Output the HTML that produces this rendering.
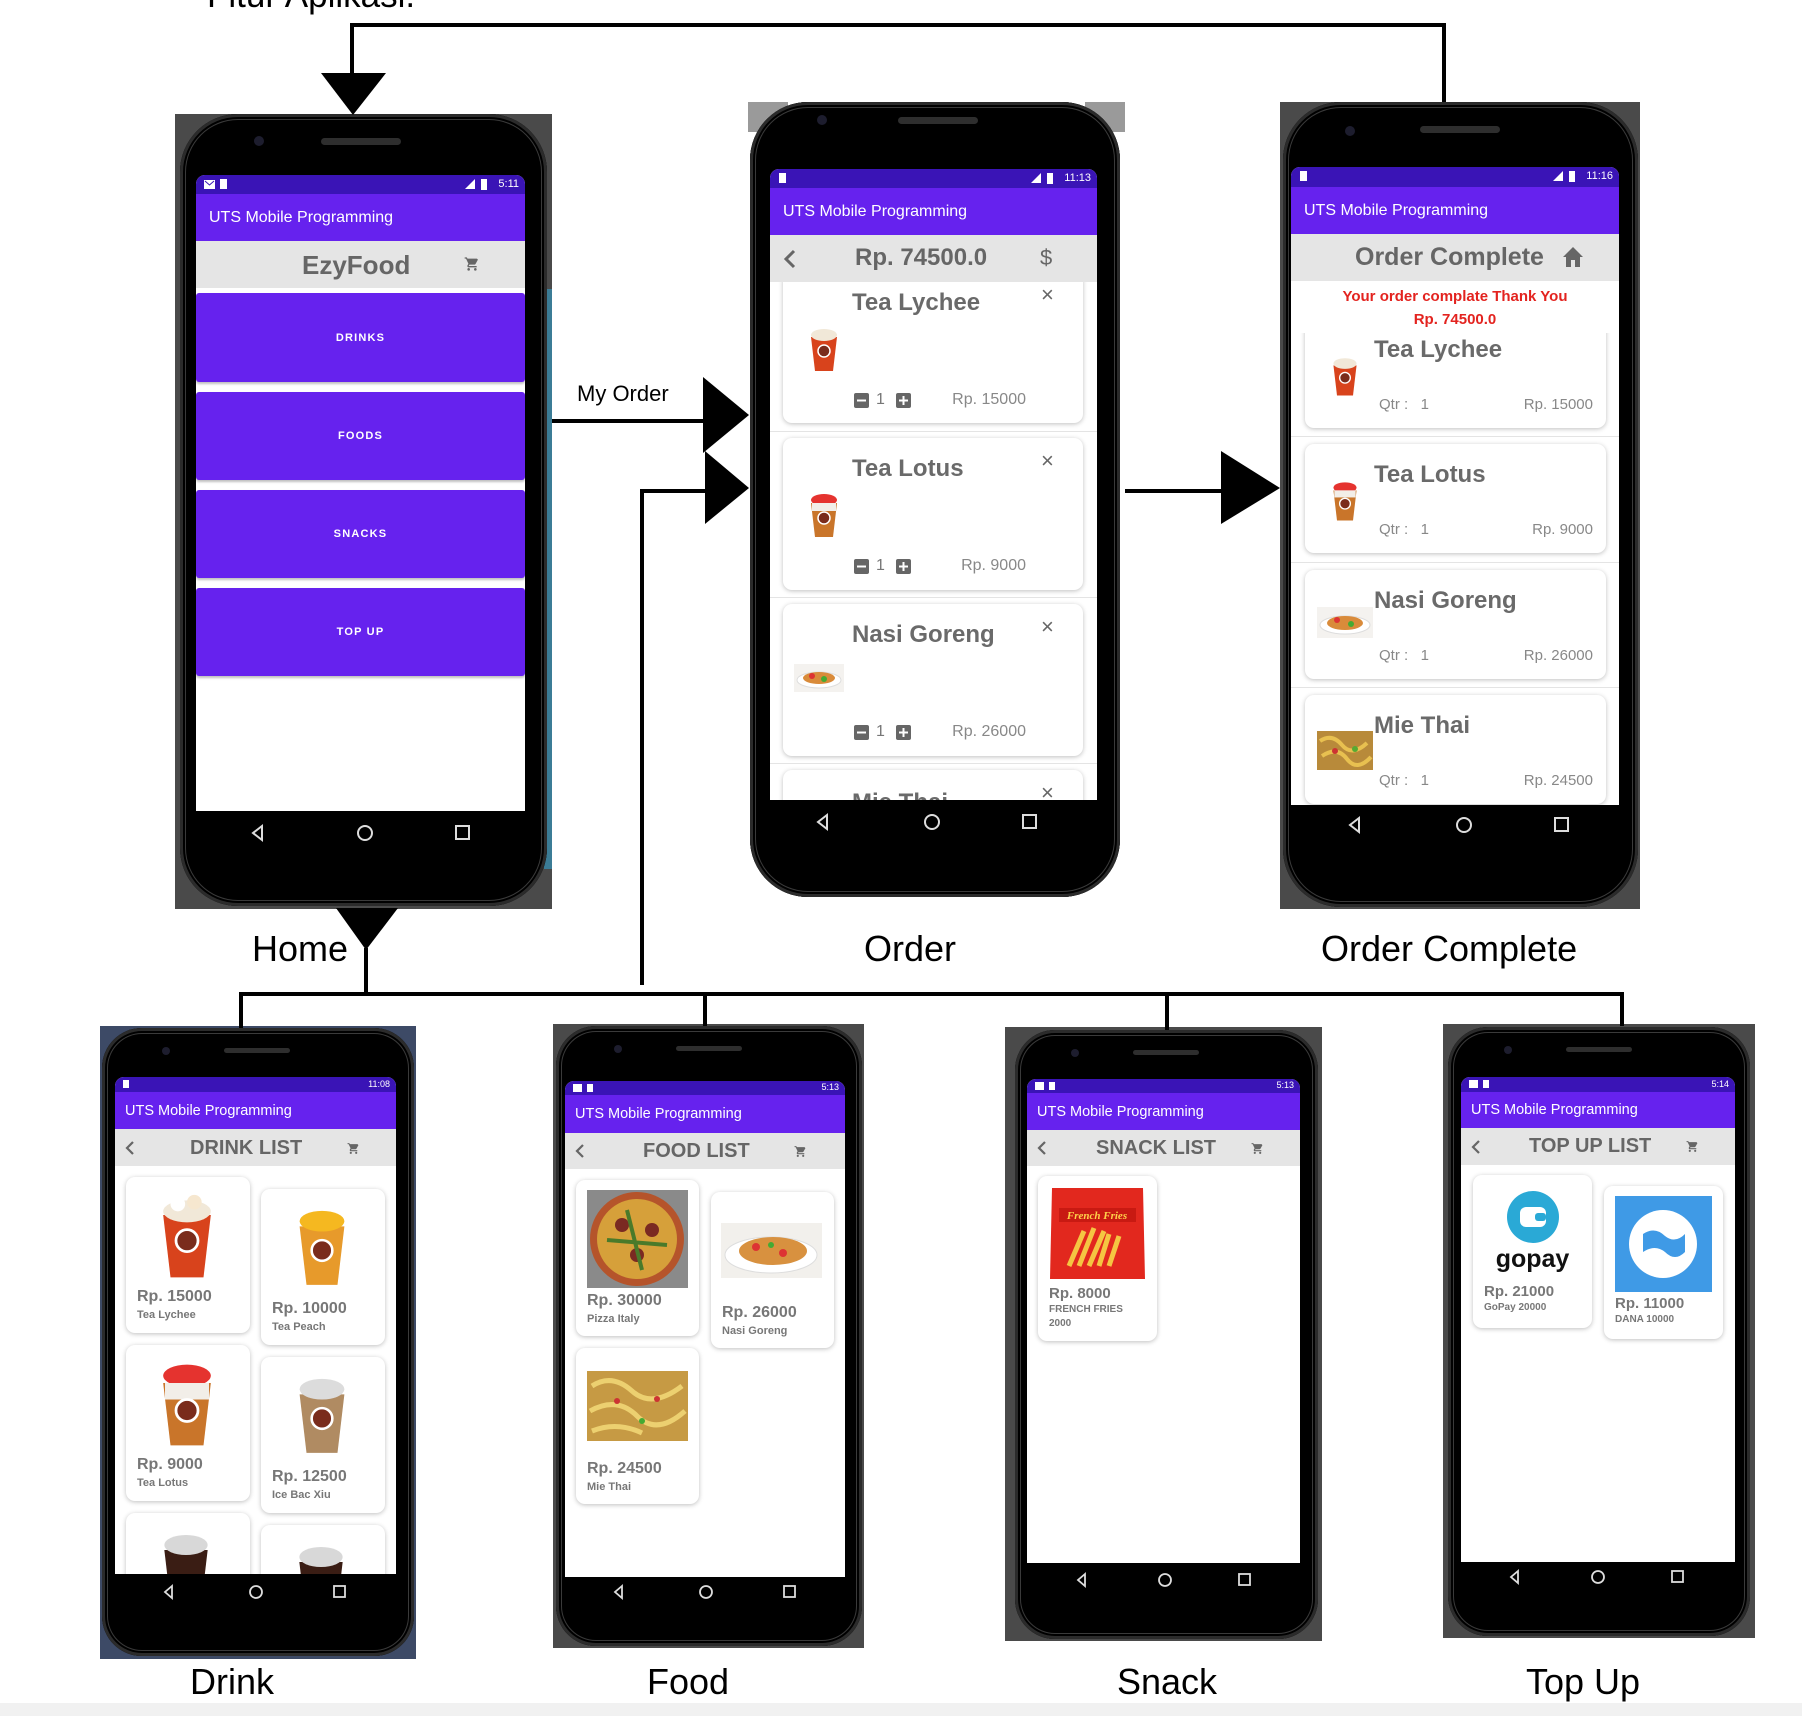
<!DOCTYPE html>
<html><head><meta charset="utf-8">
<style>
*{margin:0;padding:0;box-sizing:border-box}
body{width:1802px;height:1716px;position:relative;background:#fff;overflow:hidden;font-family:"Liberation Sans",Arial,sans-serif}
.a{position:absolute}
.box{position:absolute;background:#4a4a4a}
.bd{position:absolute;background:#000;box-shadow:inset 0 0 0 3px #2b2b2b,inset 0 0 0 5px #000,inset 0 0 0 6px #3a3a3a}
.scr{position:absolute;background:#fff;overflow:hidden;border-radius:9px 9px 0 0}
.sb{position:absolute;left:0;right:0;top:0;background:#3a14b6;color:#fff}
.ab{position:absolute;left:0;right:0;background:#6622ee;color:#fff;display:flex;align-items:center}
.hd{position:absolute;left:0;right:0;background:#e5e5e5;color:#666;font-weight:bold}
.lbl{position:absolute;font-size:36px;color:#000;white-space:nowrap}
.btn{position:absolute;left:0;right:0;background:#6622ee;color:#fff;font-size:11px;font-weight:bold;letter-spacing:1.2px;display:flex;align-items:center;justify-content:center;border-radius:3px;box-shadow:0 2px 2px rgba(0,0,0,.25)}
.card{position:absolute;background:#fff;border-radius:9px;box-shadow:0 1px 5px rgba(0,0,0,.25)}
.gt{color:#777;font-weight:bold;position:absolute;white-space:nowrap}
.spk{position:absolute;background:#2e2e2e;border-radius:4px}
.cam{position:absolute;background:#1d1d2e;border-radius:50%}
.time{position:absolute;right:6px;font-size:11px}
.bab{font-size:14.5px}
.bt{font-size:20px}
</style></head><body>

<div class="lbl" style="left:207px;top:-24px;font-size:35px">Fitur Aplikasi.</div>

<!-- ============ HOME ============ -->
<div class="box" style="left:175px;top:114px;width:377px;height:795px">
 <div class="a" style="right:0;top:175px;width:8px;height:580px;background:#3b7c96"></div>
 <div class="bd" style="left:5px;top:0;width:367px;height:792px;border-radius:58px">
  <div class="spk" style="left:141px;top:24px;width:80px;height:7px"></div>
  <div class="cam" style="left:74px;top:22px;width:10px;height:10px"></div>
  <div class="scr" style="left:16px;top:61px;width:329px;height:636px">
   <div class="sb" style="height:19px">
    <svg class="a" style="left:8px;top:4px" width="30" height="11"><rect x="0" y="1" width="11" height="9" fill="#fff"/><path d="M1 2 L5.5 6 L10 2" stroke="#3a14b6" fill="none"/><rect x="16" y="0" width="7" height="10" fill="#fff"/></svg>
    <svg class="a" style="right:34px;top:4px" width="26" height="11"><path d="M0 10 L10 0 L10 10Z" fill="#fff"/><rect x="16" y="0" width="6" height="11" fill="#fff"/></svg>
    <div class="time" style="top:3px">5:11</div>
   </div>
   <div class="ab" style="top:19px;height:47px;padding-left:13px;font-size:16px">UTS Mobile Programming</div>
   <div class="hd" style="top:66px;height:47px">
    <div class="a" style="left:106px;top:9px;font-size:26px">EzyFood</div>
    <svg class="a" style="left:268px;top:15px" width="16" height="16" viewBox="0 0 24 24"><path fill="#666" d="M7 18c-1.1 0-2 .9-2 2s.9 2 2 2 2-.9 2-2-.9-2-2-2zM1 2v2h2l3.6 7.6-1.4 2.4c-.1.3-.2.6-.2 1 0 1.1.9 2 2 2h12v-2H7.4c-.1 0-.2-.1-.2-.2v-.1l.9-1.7h7.5c.7 0 1.4-.4 1.700-1l3.6-6.5L19.4 4H5.2l-.9-2H1zm16 16c-1.1 0-2 .9-2 2s.9 2 2 2 2-.9 2-2-.9-2-2-2z"/></svg>
   </div>
   <div class="btn" style="top:118px;height:89px">DRINKS</div>
   <div class="btn" style="top:217px;height:88px">FOODS</div>
   <div class="btn" style="top:315px;height:88px">SNACKS</div>
   <div class="btn" style="top:413px;height:88px">TOP UP</div>
  </div>
  <svg class="a" style="left:70px;top:707px" width="230" height="24"><path d="M12 5 L3 12 L12 19Z" stroke="#ddd" stroke-width="2" fill="none"/><circle cx="115" cy="12" r="7" stroke="#ddd" stroke-width="2" fill="none"/><rect x="206" y="5" width="13" height="13" stroke="#ddd" stroke-width="2" fill="none"/></svg>
 </div>
</div>

<!-- ============ ORDER ============ -->
<div class="box" style="left:748px;top:102px;width:40px;height:30px;background:#9a9a9a"></div>
<div class="box" style="left:1085px;top:102px;width:40px;height:30px;background:#9a9a9a"></div>
<div class="bd" style="left:750px;top:102px;width:370px;height:795px;border-radius:58px">
 <div class="spk" style="left:148px;top:15px;width:80px;height:7px"></div>
 <div class="cam" style="left:67px;top:13px;width:10px;height:10px"></div>
 <div class="scr" style="left:20px;top:67px;width:327px;height:631px">
  <div class="card" style="left:13px;top:103px;width:300px;height:151px">
   <div class="gt" style="left:69px;top:17px;font-size:24px;color:#6a6a6a">Tea Lychee</div>
   <div class="a" style="left:258px;top:10px;font-size:22px;color:#666">×</div>
   <svg class="a" style="left:23px;top:53px" width="36" height="48" viewBox="0 0 36 48"><path d="M5 12 L31 12 L27 46 L9 46Z" fill="#d8431c"/><ellipse cx="18" cy="10" rx="13" ry="6" fill="#f1e8d8"/><circle cx="18" cy="26" r="6" fill="#7a2c1c" stroke="#fff" stroke-width="1.5"/></svg>
   <svg class="a" style="left:71px;top:121px" width="58" height="15"><rect x="0" y="0" width="15" height="15" rx="2" fill="#666"/><rect x="3" y="6.5" width="9" height="2" fill="#fff"/><rect x="42" y="0" width="15" height="15" rx="2" fill="#666"/><rect x="45" y="6.5" width="9" height="2" fill="#fff"/><rect x="48.5" y="3" width="2" height="9" fill="#fff"/></svg>
   <div class="a" style="left:93px;top:119px;font-size:16px;color:#777">1</div>
   <div class="a" style="right:57px;top:119px;font-size:16px;color:#888">Rp. 15000</div>
  </div>
  <div class="a" style="left:0;right:0;top:262px;height:1px;background:#e4e4e4"></div>
  <div class="card" style="left:13px;top:269px;width:300px;height:152px">
   <div class="gt" style="left:69px;top:17px;font-size:24px;color:#6a6a6a">Tea Lotus</div>
   <div class="a" style="left:258px;top:10px;font-size:22px;color:#666">×</div>
   <svg class="a" style="left:23px;top:53px" width="36" height="48" viewBox="0 0 36 48"><path d="M5 12 L31 12 L27 46 L9 46Z" fill="#c9752a"/><ellipse cx="18" cy="9" rx="13" ry="6" fill="#e5332f"/><rect x="6" y="12" width="24" height="8" fill="#f2eee8"/><circle cx="18" cy="27" r="6" fill="#7a2c1c" stroke="#fff" stroke-width="1.5"/></svg>
   <svg class="a" style="left:71px;top:121px" width="58" height="15"><rect x="0" y="0" width="15" height="15" rx="2" fill="#666"/><rect x="3" y="6.5" width="9" height="2" fill="#fff"/><rect x="42" y="0" width="15" height="15" rx="2" fill="#666"/><rect x="45" y="6.5" width="9" height="2" fill="#fff"/><rect x="48.5" y="3" width="2" height="9" fill="#fff"/></svg>
   <div class="a" style="left:93px;top:119px;font-size:16px;color:#777">1</div>
   <div class="a" style="right:57px;top:119px;font-size:16px;color:#888">Rp. 9000</div>
  </div>
  <div class="a" style="left:0;right:0;top:428px;height:1px;background:#e4e4e4"></div>
  <div class="card" style="left:13px;top:435px;width:300px;height:152px">
   <div class="gt" style="left:69px;top:17px;font-size:24px;color:#6a6a6a">Nasi Goreng</div>
   <div class="a" style="left:258px;top:10px;font-size:22px;color:#666">×</div>
   <svg class="a" style="left:11px;top:60px" width="50" height="28"><rect width="50" height="28" fill="#f4f2ef"/><ellipse cx="25" cy="16" rx="22" ry="8" fill="#fff" stroke="#ddd"/><ellipse cx="25" cy="14" rx="16" ry="6" fill="#d98b3a"/><circle cx="18" cy="12" r="3" fill="#d33"/><circle cx="30" cy="15" r="3" fill="#4a3"/></svg>
   <svg class="a" style="left:71px;top:121px" width="58" height="15"><rect x="0" y="0" width="15" height="15" rx="2" fill="#666"/><rect x="3" y="6.5" width="9" height="2" fill="#fff"/><rect x="42" y="0" width="15" height="15" rx="2" fill="#666"/><rect x="45" y="6.5" width="9" height="2" fill="#fff"/><rect x="48.5" y="3" width="2" height="9" fill="#fff"/></svg>
   <div class="a" style="left:93px;top:119px;font-size:16px;color:#777">1</div>
   <div class="a" style="right:57px;top:119px;font-size:16px;color:#888">Rp. 26000</div>
  </div>
  <div class="a" style="left:0;right:0;top:594px;height:1px;background:#e4e4e4"></div>
  <div class="card" style="left:13px;top:601px;width:300px;height:152px">
   <div class="gt" style="left:69px;top:19px;font-size:24px;color:#6a6a6a">Mie Thai</div>
   <div class="a" style="left:258px;top:10px;font-size:22px;color:#666">×</div>
  </div>
  <div class="sb" style="height:19px">
   <svg class="a" style="left:8px;top:4px" width="10" height="11"><rect x="1" y="0" width="7" height="10" fill="#fff"/></svg>
   <svg class="a" style="right:40px;top:4px" width="26" height="11"><path d="M0 10 L10 0 L10 10Z" fill="#fff"/><rect x="16" y="0" width="6" height="11" fill="#fff"/></svg>
   <div class="time" style="top:3px">11:13</div>
  </div>
  <div class="ab" style="top:19px;height:47px;padding-left:13px;font-size:16px">UTS Mobile Programming</div>
  <div class="hd" style="top:66px;height:47px">
   <svg class="a" style="left:13px;top:14px" width="14" height="20"><path d="M11 2 L3 10 L11 18" stroke="#666" stroke-width="3" fill="none"/></svg>
   <div class="a" style="left:85px;top:9px;font-size:24px">Rp. 74500.0</div>
   <div class="a" style="left:270px;top:10px;font-size:22px;font-weight:normal">$</div>
  </div>
 </div>
 <svg class="a" style="left:65px;top:708px" width="230" height="24"><path d="M12 5 L3 12 L12 19Z" stroke="#ddd" stroke-width="2" fill="none"/><circle cx="117" cy="12" r="7" stroke="#ddd" stroke-width="2" fill="none"/><rect x="208" y="5" width="13" height="13" stroke="#ddd" stroke-width="2" fill="none"/></svg>
</div>

<!-- ============ ORDER COMPLETE ============ -->
<div class="box" style="left:1280px;top:102px;width:360px;height:807px">
 <div class="bd" style="left:3px;top:0;width:355px;height:805px;border-radius:58px">
  <div class="spk" style="left:137px;top:24px;width:80px;height:7px"></div>
  <div class="cam" style="left:62px;top:24px;width:10px;height:10px"></div>
  <div class="scr" style="left:8px;top:65px;width:328px;height:638px">
   <div class="sb" style="height:20px">
    <svg class="a" style="left:8px;top:4px" width="10" height="11"><rect x="1" y="0" width="7" height="10" fill="#fff"/></svg>
    <svg class="a" style="right:40px;top:4px" width="26" height="11"><path d="M0 10 L10 0 L10 10Z" fill="#fff"/><rect x="16" y="0" width="6" height="11" fill="#fff"/></svg>
    <div class="time" style="top:3px">11:16</div>
   </div>
   <div class="ab" style="top:20px;height:47px;padding-left:13px;font-size:16px">UTS Mobile Programming</div>
   <div class="hd" style="top:67px;height:47px">
    <div class="a" style="left:64px;top:9px;font-size:25px">Order Complete</div>
    <svg class="a" style="left:270px;top:12px" width="24" height="22" viewBox="0 0 24 22"><path d="M10 21v-7h4v7h5V11h3L12 1 2 11h3v10z" fill="#666"/></svg>
   </div>
   <div class="a" style="left:0;width:328px;top:118px;text-align:center;color:#e3231f;font-weight:bold;font-size:15px;line-height:23px">Your order complate Thank You<br>Rp. 74500.0</div>
   <div class="a" style="left:0;top:166px;width:328px;height:472px;overflow:hidden">
    <div class="card" style="left:14px;top:-14px;width:301px;height:109px">
     <div class="gt" style="left:69px;top:17px;font-size:24px;color:#6a6a6a">Tea Lychee</div>
     <svg class="a" style="left:24px;top:35px" width="32" height="44" viewBox="0 0 36 48"><path d="M5 12 L31 12 L27 46 L9 46Z" fill="#d8431c"/><ellipse cx="18" cy="10" rx="13" ry="6" fill="#f1e8d8"/><circle cx="18" cy="26" r="6" fill="#7a2c1c" stroke="#fff" stroke-width="1.5"/></svg>
     <div class="a" style="left:74px;top:77px;font-size:15px;color:#888">Qtr :&nbsp;&nbsp;&nbsp;1</div>
     <div class="a" style="right:13px;top:77px;font-size:15px;color:#888">Rp. 15000</div>
    </div>
    <div class="a" style="left:0;right:0;top:103px;height:1px;background:#e4e4e4"></div>
    <div class="card" style="left:14px;top:111px;width:301px;height:109px">
     <div class="gt" style="left:69px;top:17px;font-size:24px;color:#6a6a6a">Tea Lotus</div>
     <svg class="a" style="left:24px;top:35px" width="32" height="44" viewBox="0 0 36 48"><path d="M5 12 L31 12 L27 46 L9 46Z" fill="#c9752a"/><ellipse cx="18" cy="9" rx="13" ry="6" fill="#e5332f"/><rect x="6" y="12" width="24" height="8" fill="#f2eee8"/><circle cx="18" cy="27" r="6" fill="#7a2c1c" stroke="#fff" stroke-width="1.5"/></svg>
     <div class="a" style="left:74px;top:77px;font-size:15px;color:#888">Qtr :&nbsp;&nbsp;&nbsp;1</div>
     <div class="a" style="right:13px;top:77px;font-size:15px;color:#888">Rp. 9000</div>
    </div>
    <div class="a" style="left:0;right:0;top:229px;height:1px;background:#e4e4e4"></div>
    <div class="card" style="left:14px;top:237px;width:301px;height:109px">
     <div class="gt" style="left:69px;top:17px;font-size:24px;color:#6a6a6a">Nasi Goreng</div>
     <svg class="a" style="left:12px;top:37px" width="56" height="31"><rect width="56" height="31" fill="#f4f2ef"/><ellipse cx="28" cy="18" rx="25" ry="9" fill="#fff" stroke="#ddd"/><ellipse cx="28" cy="16" rx="18" ry="7" fill="#d98b3a"/><circle cx="20" cy="13" r="3" fill="#d33"/><circle cx="34" cy="17" r="3" fill="#4a3"/></svg>
     <div class="a" style="left:74px;top:77px;font-size:15px;color:#888">Qtr :&nbsp;&nbsp;&nbsp;1</div>
     <div class="a" style="right:13px;top:77px;font-size:15px;color:#888">Rp. 26000</div>
    </div>
    <div class="a" style="left:0;right:0;top:354px;height:1px;background:#e4e4e4"></div>
    <div class="card" style="left:14px;top:362px;width:301px;height:109px">
     <div class="gt" style="left:69px;top:17px;font-size:24px;color:#6a6a6a">Mie Thai</div>
     <svg class="a" style="left:12px;top:36px" width="56" height="39"><rect width="56" height="39" fill="#b88a3a"/><path d="M3 10 Q15 2 25 14 T50 12 M5 25 Q20 15 30 28 T54 26" stroke="#e8c050" stroke-width="4" fill="none"/><circle cx="18" cy="20" r="3" fill="#c33"/><circle cx="38" cy="18" r="3" fill="#5a3"/></svg>
     <div class="a" style="left:74px;top:77px;font-size:15px;color:#888">Qtr :&nbsp;&nbsp;&nbsp;1</div>
     <div class="a" style="right:13px;top:77px;font-size:15px;color:#888">Rp. 24500</div>
    </div>
   </div>
  </div>
  <svg class="a" style="left:64px;top:711px" width="230" height="24"><path d="M12 5 L3 12 L12 19Z" stroke="#ddd" stroke-width="2" fill="none"/><circle cx="117" cy="12" r="7" stroke="#ddd" stroke-width="2" fill="none"/><rect x="208" y="5" width="13" height="13" stroke="#ddd" stroke-width="2" fill="none"/></svg>
 </div>
</div>

<!-- labels -->
<div class="lbl" style="left:252px;top:928px">Home</div>
<div class="lbl" style="left:864px;top:928px">Order</div>
<div class="lbl" style="left:1321px;top:928px">Order Complete</div>
<div class="lbl" style="left:190px;top:1661px">Drink</div>
<div class="lbl" style="left:647px;top:1661px">Food</div>
<div class="lbl" style="left:1117px;top:1661px">Snack</div>
<div class="lbl" style="left:1526px;top:1661px">Top Up</div>

<!-- ============ DRINK ============ -->
<div class="box" style="left:100px;top:1026px;width:316px;height:633px;background:#3d4a66">
 <div class="bd" style="left:2px;top:2px;width:312px;height:628px;border-radius:40px">
  <div class="spk" style="left:122px;top:20px;width:66px;height:5px"></div>
  <div class="cam" style="left:60px;top:19px;width:8px;height:8px"></div>
  <div class="scr" style="left:13px;top:49px;width:281px;height:497px">
   <div class="card" style="left:11px;top:100px;width:124px;height:156px">
    <svg class="a" style="left:28px;top:15px" width="66" height="90" viewBox="0 0 36 48"><path d="M5 12 L31 12 L27 46 L9 46Z" fill="#d8431c"/><ellipse cx="18" cy="10" rx="13" ry="6" fill="#f1e8d8"/><circle cx="13" cy="6" r="4" fill="#fff"/><circle cx="22" cy="5" r="4" fill="#f6e7cf"/><circle cx="18" cy="26" r="6" fill="#7a2c1c" stroke="#fff" stroke-width="1.5"/></svg>
    <div class="gt" style="left:11px;top:111px;font-size:16px">Rp. 15000</div>
    <div class="gt" style="left:11px;top:132px;font-size:11px">Tea Lychee</div>
   </div>
   <div class="card" style="left:146px;top:112px;width:124px;height:156px">
    <svg class="a" style="left:30px;top:15px" width="62" height="86" viewBox="0 0 36 48"><path d="M5 12 L31 12 L27 46 L9 46Z" fill="#e79a2b"/><ellipse cx="18" cy="9" rx="13" ry="6" fill="#f5b820"/><circle cx="18" cy="26" r="6" fill="#7a2c1c" stroke="#fff" stroke-width="1.5"/></svg>
    <div class="gt" style="left:11px;top:111px;font-size:16px">Rp. 10000</div>
    <div class="gt" style="left:11px;top:132px;font-size:11px">Tea Peach</div>
   </div>
   <div class="card" style="left:11px;top:268px;width:124px;height:156px">
    <svg class="a" style="left:28px;top:15px" width="66" height="90" viewBox="0 0 36 48"><path d="M5 12 L31 12 L27 46 L9 46Z" fill="#c9752a"/><ellipse cx="18" cy="8" rx="13" ry="6" fill="#e5332f"/><rect x="6" y="12" width="24" height="9" fill="#f2eee8"/><circle cx="18" cy="27" r="6" fill="#7a2c1c" stroke="#fff" stroke-width="1.5"/></svg>
    <div class="gt" style="left:11px;top:111px;font-size:16px">Rp. 9000</div>
    <div class="gt" style="left:11px;top:132px;font-size:11px">Tea Lotus</div>
   </div>
   <div class="card" style="left:146px;top:280px;width:124px;height:156px">
    <svg class="a" style="left:30px;top:15px" width="62" height="86" viewBox="0 0 36 48"><path d="M5 12 L31 12 L27 46 L9 46Z" fill="#b08b62"/><ellipse cx="18" cy="9" rx="13" ry="6" fill="#dcdcdc"/><circle cx="18" cy="26" r="6" fill="#7a2c1c" stroke="#fff" stroke-width="1.5"/></svg>
    <div class="gt" style="left:11px;top:111px;font-size:16px">Rp. 12500</div>
    <div class="gt" style="left:11px;top:132px;font-size:11px">Ice Bac Xiu</div>
   </div>
   <div class="card" style="left:11px;top:436px;width:124px;height:156px">
    <svg class="a" style="left:30px;top:15px" width="60" height="84" viewBox="0 0 36 48"><path d="M5 12 L31 12 L27 46 L9 46Z" fill="#3a1d14"/><ellipse cx="18" cy="9" rx="13" ry="6" fill="#d8d8d8"/></svg>
   </div>
   <div class="card" style="left:146px;top:448px;width:124px;height:156px">
    <svg class="a" style="left:30px;top:15px" width="60" height="84" viewBox="0 0 36 48"><path d="M5 12 L31 12 L27 46 L9 46Z" fill="#3a1d14"/><ellipse cx="18" cy="9" rx="13" ry="6" fill="#d8d8d8"/></svg>
   </div>
   <div class="sb" style="height:15px"><svg class="a" style="left:8px;top:3px" width="8" height="9"><rect x="0" y="0" width="6" height="8" fill="#fff"/></svg><div class="time" style="top:2px;font-size:9px">11:08</div></div>
   <div class="ab bab" style="top:15px;height:37px;padding-left:10px">UTS Mobile Programming</div>
   <div class="hd" style="top:52px;height:37px">
    <svg class="a" style="left:10px;top:12px" width="10" height="14"><path d="M8 1 L2 7 L8 13" stroke="#666" stroke-width="2.2" fill="none"/></svg>
    <div class="a bt" style="left:75px;top:8px">DRINK LIST</div>
    <svg class="a" style="left:232px;top:13px" width="13" height="13" viewBox="0 0 24 24"><path fill="#666" d="M7 18c-1.1 0-2 .9-2 2s.9 2 2 2 2-.9 2-2-.9-2-2-2zM1 2v2h2l3.6 7.6-1.4 2.4c-.1.3-.2.6-.2 1 0 1.1.9 2 2 2h12v-2H7.4l.9-1.7h7.5c.7 0 1.4-.4 1.7-1l3.6-6.5L19.4 4H5.2l-.9-2H1zm16 16c-1.1 0-2 .9-2 2s.9 2 2 2 2-.9 2-2-.9-2-2-2z"/></svg>
   </div>
  </div>
  <svg class="a" style="left:60px;top:554px" width="190" height="20"><path d="M10 4 L3 10 L10 16Z" stroke="#ddd" stroke-width="1.8" fill="none"/><circle cx="94" cy="10" r="6" stroke="#ddd" stroke-width="1.8" fill="none"/><rect x="172" y="4" width="11" height="11" stroke="#ddd" stroke-width="1.8" fill="none"/></svg>
 </div>
</div>

<!-- ============ FOOD ============ -->
<div class="box" style="left:553px;top:1024px;width:311px;height:624px">
 <div class="bd" style="left:3px;top:2px;width:306px;height:620px;border-radius:40px">
  <div class="spk" style="left:120px;top:20px;width:66px;height:5px"></div>
  <div class="cam" style="left:58px;top:19px;width:8px;height:8px"></div>
  <div class="scr" style="left:9px;top:55px;width:280px;height:496px">
   <div class="card" style="left:11px;top:99px;width:123px;height:156px">
    <svg class="a" style="left:11px;top:10px" width="101" height="98"><rect width="101" height="98" fill="#8a8a8a"/><circle cx="50" cy="49" r="47" fill="#b5542b"/><circle cx="50" cy="49" r="40" fill="#d6a03a"/><circle cx="35" cy="35" r="7" fill="#7a2a22"/><circle cx="65" cy="40" r="7" fill="#7a2a22"/><circle cx="50" cy="65" r="7" fill="#7a2a22"/><path d="M20 50 L80 55 M40 20 L55 80" stroke="#4a7a2a" stroke-width="4"/></svg>
    <div class="gt" style="left:11px;top:112px;font-size:16px">Rp. 30000</div>
    <div class="gt" style="left:11px;top:133px;font-size:11px">Pizza Italy</div>
   </div>
   <div class="card" style="left:146px;top:111px;width:123px;height:156px">
    <svg class="a" style="left:10px;top:31px" width="101" height="55"><rect width="101" height="55" fill="#f2f0ec"/><ellipse cx="50" cy="32" rx="46" ry="18" fill="#fff" stroke="#ddd"/><ellipse cx="52" cy="28" rx="34" ry="14" fill="#d8913f"/><circle cx="35" cy="24" r="4" fill="#d33"/><circle cx="62" cy="30" r="4" fill="#d33"/><circle cx="50" cy="22" r="3" fill="#4a3"/></svg>
    <div class="gt" style="left:11px;top:112px;font-size:16px">Rp. 26000</div>
    <div class="gt" style="left:11px;top:133px;font-size:11px">Nasi Goreng</div>
   </div>
   <div class="card" style="left:11px;top:267px;width:123px;height:156px">
    <svg class="a" style="left:11px;top:23px" width="101" height="70"><rect width="101" height="70" fill="#c69a44"/><path d="M5 15 Q25 2 45 20 T95 15 M3 40 Q30 25 50 45 T98 40 M5 60 Q30 50 55 62" stroke="#ecd070" stroke-width="5" fill="none"/><circle cx="30" cy="30" r="3" fill="#c33"/><circle cx="70" cy="28" r="3" fill="#c33"/><circle cx="55" cy="50" r="3" fill="#4a3"/></svg>
    <div class="gt" style="left:11px;top:112px;font-size:16px">Rp. 24500</div>
    <div class="gt" style="left:11px;top:133px;font-size:11px">Mie Thai</div>
   </div>
   <div class="sb" style="height:14px"><svg class="a" style="left:8px;top:3px" width="24" height="9"><rect x="0" y="0" width="9" height="8" fill="#fff"/><rect x="14" y="0" width="6" height="8" fill="#fff"/></svg><div class="time" style="top:1px;font-size:9px">5:13</div></div>
   <div class="ab bab" style="top:14px;height:38px;padding-left:10px">UTS Mobile Programming</div>
   <div class="hd" style="top:52px;height:36px">
    <svg class="a" style="left:10px;top:11px" width="10" height="14"><path d="M8 1 L2 7 L8 13" stroke="#666" stroke-width="2.2" fill="none"/></svg>
    <div class="a bt" style="left:78px;top:7px">FOOD LIST</div>
    <svg class="a" style="left:229px;top:12px" width="13" height="13" viewBox="0 0 24 24"><path fill="#666" d="M7 18c-1.1 0-2 .9-2 2s.9 2 2 2 2-.9 2-2-.9-2-2-2zM1 2v2h2l3.6 7.6-1.4 2.4c-.1.3-.2.6-.2 1 0 1.1.9 2 2 2h12v-2H7.4l.9-1.7h7.5c.7 0 1.4-.4 1.7-1l3.6-6.5L19.4 4H5.2l-.9-2H1zm16 16c-1.1 0-2 .9-2 2s.9 2 2 2 2-.9 2-2-.9-2-2-2z"/></svg>
   </div>
  </div>
  <svg class="a" style="left:56px;top:556px" width="190" height="20"><path d="M10 4 L3 10 L10 16Z" stroke="#ddd" stroke-width="1.8" fill="none"/><circle cx="94" cy="10" r="6" stroke="#ddd" stroke-width="1.8" fill="none"/><rect x="172" y="4" width="11" height="11" stroke="#ddd" stroke-width="1.8" fill="none"/></svg>
 </div>
</div>

<!-- ============ SNACK ============ -->
<div class="box" style="left:1005px;top:1027px;width:317px;height:614px">
 <div class="bd" style="left:10px;top:3px;width:303px;height:609px;border-radius:40px">
  <div class="spk" style="left:118px;top:20px;width:66px;height:5px"></div>
  <div class="cam" style="left:56px;top:19px;width:8px;height:8px"></div>
  <div class="scr" style="left:12px;top:49px;width:273px;height:484px">
   <div class="card" style="left:11px;top:97px;width:119px;height:165px">
    <svg class="a" style="left:11px;top:10px" width="97" height="95"><path d="M3 2 L94 2 L96 93 L1 93Z" fill="#e2281e"/><rect x="10" y="22" width="77" height="14" fill="#c81a12"/><text x="48" y="33" font-size="11" fill="#ffd24a" text-anchor="middle" font-family="Liberation Serif" font-style="italic" font-weight="bold">French Fries</text><path d="M20 80 L35 45 M30 80 L45 42 M40 80 L55 45 M50 80 L60 48 M60 80 L70 50" stroke="#f5c542" stroke-width="5"/></svg>
    <div class="gt" style="left:11px;top:109px;font-size:15px">Rp. 8000</div>
    <div class="gt" style="left:11px;top:127px;font-size:10px;line-height:14px">FRENCH FRIES<br>2000</div>
   </div>
   <div class="sb" style="height:14px"><svg class="a" style="left:8px;top:3px" width="24" height="9"><rect x="0" y="0" width="9" height="8" fill="#fff"/><rect x="14" y="0" width="6" height="8" fill="#fff"/></svg><div class="time" style="top:1px;font-size:9px">5:13</div></div>
   <div class="ab bab" style="top:14px;height:37px;padding-left:10px">UTS Mobile Programming</div>
   <div class="hd" style="top:51px;height:36px">
    <svg class="a" style="left:10px;top:11px" width="10" height="14"><path d="M8 1 L2 7 L8 13" stroke="#666" stroke-width="2.2" fill="none"/></svg>
    <div class="a bt" style="left:69px;top:7px">SNACK LIST</div>
    <svg class="a" style="left:224px;top:12px" width="13" height="13" viewBox="0 0 24 24"><path fill="#666" d="M7 18c-1.1 0-2 .9-2 2s.9 2 2 2 2-.9 2-2-.9-2-2-2zM1 2v2h2l3.6 7.6-1.4 2.4c-.1.3-.2.6-.2 1 0 1.1.9 2 2 2h12v-2H7.4l.9-1.7h7.5c.7 0 1.4-.4 1.7-1l3.6-6.5L19.4 4H5.2l-.9-2H1zm16 16c-1.1 0-2 .9-2 2s.9 2 2 2 2-.9 2-2-.9-2-2-2z"/></svg>
   </div>
  </div>
  <svg class="a" style="left:60px;top:540px" width="190" height="20"><path d="M10 4 L3 10 L10 16Z" stroke="#ddd" stroke-width="1.8" fill="none"/><circle cx="90" cy="10" r="6" stroke="#ddd" stroke-width="1.8" fill="none"/><rect x="164" y="4" width="11" height="11" stroke="#ddd" stroke-width="1.8" fill="none"/></svg>
 </div>
</div>

<!-- ============ TOP UP ============ -->
<div class="box" style="left:1443px;top:1024px;width:312px;height:614px">
 <div class="bd" style="left:5px;top:3px;width:302px;height:609px;border-radius:40px">
  <div class="spk" style="left:118px;top:20px;width:66px;height:5px"></div>
  <div class="cam" style="left:56px;top:19px;width:8px;height:8px"></div>
  <div class="scr" style="left:13px;top:50px;width:274px;height:485px">
   <div class="card" style="left:12px;top:98px;width:119px;height:153px">
    <svg class="a" style="left:32px;top:14px" width="56" height="56"><circle cx="28" cy="28" r="26" fill="#2aa9d6"/><rect x="15" y="18" width="26" height="20" rx="6" fill="#fff"/><rect x="30" y="24" width="11" height="8" rx="3" fill="#2aa9d6"/></svg>
    <div class="a" style="left:0;width:119px;top:70px;text-align:center;font-size:25px;font-weight:bold;color:#111">gopay</div>
    <div class="gt" style="left:11px;top:108px;font-size:15px">Rp. 21000</div>
    <div class="gt" style="left:11px;top:127px;font-size:10px">GoPay 20000</div>
   </div>
   <div class="card" style="left:143px;top:109px;width:119px;height:153px">
    <svg class="a" style="left:11px;top:10px" width="97" height="96"><rect width="97" height="96" fill="#3f9ae6"/><circle cx="48" cy="48" r="34" fill="#fff"/><path d="M28 38 Q40 30 50 40 Q60 48 70 38 L70 56 Q60 66 50 56 Q40 48 28 56Z" fill="#3f9ae6"/></svg>
    <div class="gt" style="left:11px;top:109px;font-size:15px">Rp. 11000</div>
    <div class="gt" style="left:11px;top:128px;font-size:10px">DANA 10000</div>
   </div>
   <div class="sb" style="height:15px"><svg class="a" style="left:8px;top:3px" width="24" height="9"><rect x="0" y="0" width="9" height="8" fill="#fff"/><rect x="14" y="0" width="6" height="8" fill="#fff"/></svg><div class="time" style="top:2px;font-size:9px">5:14</div></div>
   <div class="ab bab" style="top:15px;height:36px;padding-left:10px">UTS Mobile Programming</div>
   <div class="hd" style="top:51px;height:37px">
    <svg class="a" style="left:10px;top:12px" width="10" height="14"><path d="M8 1 L2 7 L8 13" stroke="#666" stroke-width="2.2" fill="none"/></svg>
    <div class="a bt" style="left:68px;top:7px">TOP UP LIST</div>
    <svg class="a" style="left:225px;top:12px" width="13" height="13" viewBox="0 0 24 24"><path fill="#666" d="M7 18c-1.1 0-2 .9-2 2s.9 2 2 2 2-.9 2-2-.9-2-2-2zM1 2v2h2l3.6 7.6-1.4 2.4c-.1.3-.2.6-.2 1 0 1.1.9 2 2 2h12v-2H7.4l.9-1.7h7.5c.7 0 1.4-.4 1.7-1l3.6-6.5L19.4 4H5.2l-.9-2H1zm16 16c-1.1 0-2 .9-2 2s.9 2 2 2 2-.9 2-2-.9-2-2-2z"/></svg>
   </div>
  </div>
  <svg class="a" style="left:60px;top:540px" width="190" height="20"><path d="M10 4 L3 10 L10 16Z" stroke="#ddd" stroke-width="1.8" fill="none"/><circle cx="90" cy="10" r="6" stroke="#ddd" stroke-width="1.8" fill="none"/><rect x="164" y="4" width="11" height="11" stroke="#ddd" stroke-width="1.8" fill="none"/></svg>
 </div>
</div>

<div class="a" style="left:0;top:1703px;width:1802px;height:13px;background:#f1f1f1"></div>
<div class="lbl" style="left:577px;top:381px;font-size:22px">My Order</div>

<!-- connectors -->
<svg class="a" style="left:0;top:0" width="1802" height="1716">
 <g stroke="#000" stroke-width="4" fill="none">
  <polyline points="352,75 352,25 1444,25 1444,102"/>
  <line x1="552" y1="421" x2="706" y2="421"/>
  <polyline points="642,985 642,491 706,491"/>
  <line x1="1125" y1="491" x2="1223" y2="491"/>
  <line x1="366" y1="948" x2="366" y2="994"/>
  <line x1="239" y1="994" x2="1624" y2="994"/>
  <line x1="241" y1="994" x2="241" y2="1028"/>
  <line x1="705" y1="994" x2="705" y2="1026"/>
  <line x1="1167" y1="994" x2="1167" y2="1030"/>
  <line x1="1622" y1="994" x2="1622" y2="1026"/>
 </g>
 <g fill="#000">
  <polygon points="321,73 386,73 353,115"/>
  <polygon points="703,377 703,453 749,415"/>
  <polygon points="705,451 705,524 749,488"/>
  <polygon points="1221,451 1221,524 1280,488"/>
  <polygon points="336,908 398,908 366,950"/>
 </g>
</svg>
</body></html>
